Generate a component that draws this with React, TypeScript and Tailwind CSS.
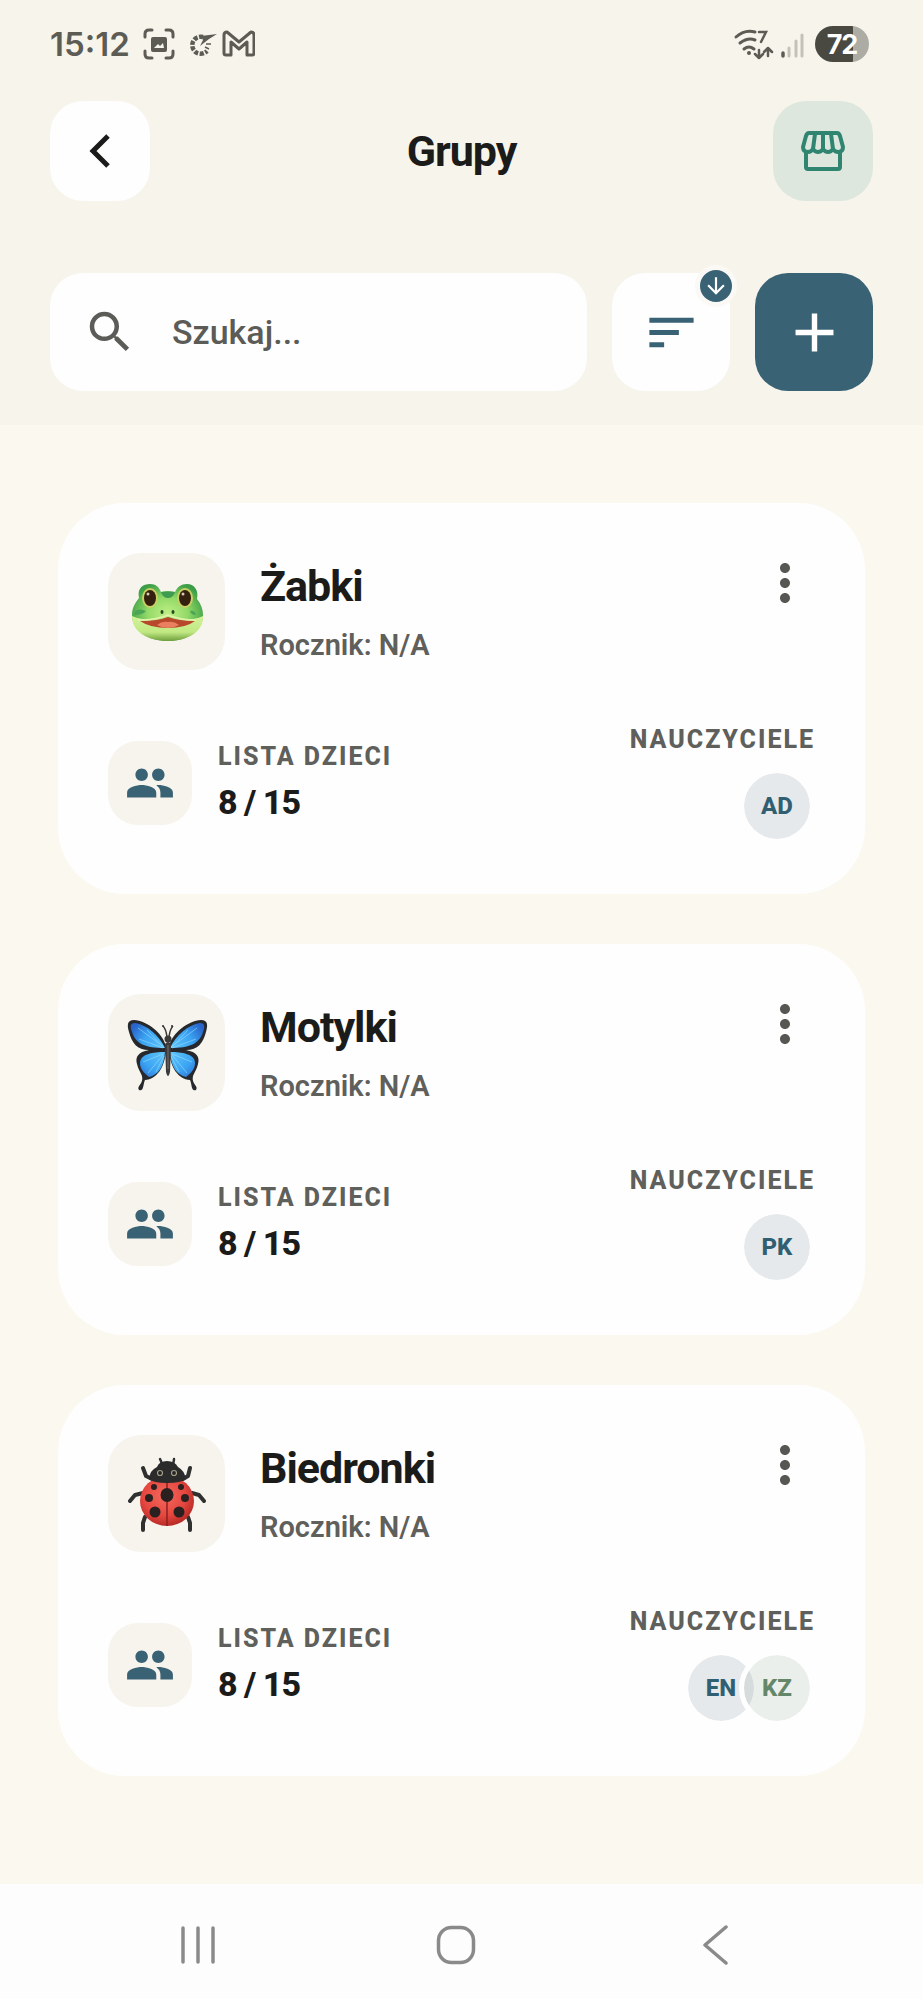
import { useState } from 'react'
import { MdAdd, MdArrowDownward, MdMoreVert, MdPeople, MdSearch, MdSort } from 'react-icons/md'

type Teacher = { initials: string; tone: 'blue' | 'green' }
type Group = { name: string; year: string; children: number; limit: number; icon: () => React.ReactNode; teachers: Teacher[] }

const tones = {
  blue: 'bg-[#2f566d]/12 text-[#315f72]',
  green: 'bg-[#5f8263]/12 text-[#64876a]',
}

function Frog() {
  return (
    <svg viewBox="-3 1 140 140" className="size-[140px] shrink-0" aria-hidden="true">
      <defs>
        <radialGradient id="frogSkin" cx="50%" cy="52%" r="56%">
          <stop offset="0" stopColor="#c0ef86" />
          <stop offset="0.5" stopColor="#93da68" />
          <stop offset="1" stopColor="#3b9d46" />
        </radialGradient>
        <linearGradient id="frogChin" x1="0" y1="0" x2="0" y2="1">
          <stop offset="0" stopColor="#d3f39a" />
          <stop offset="0.65" stopColor="#c0e882" />
          <stop offset="1" stopColor="#6f9f3c" />
        </linearGradient>
      </defs>
      <path d="M39 57C37 47 43 43 50 43c6 0 9 3 11 8q7-2 14 0c2-5 6-8 12-8 7 0 12 6 10 15 4 5 6 10 6 16 0 16-16 26-35 26S32 90 32 74c0-7 3-12 7-17Z" fill="url(#frogSkin)" />
      <path d="M61 51q7-1 14 0-2 6-7 6t-7-6Z" fill="#3f9b50" />
      <path d="M32 75c11 5 23 4 36 2 13 2 25 3 35-2 1 15-15 25-35 25S32 91 32 75Z" fill="url(#frogChin)" />
      <path d="M40 80q18 0 28-4 11 4 27 4-9 7-27 7t-28-7Z" fill="#b8482c" />
      <path d="M57 84q5-4 11-3 6-1 11 3-5 3-11 3t-11-3Z" fill="#ea8060" />
      <path d="M38 79q19 0 30-5 12 5 28 5" fill="none" stroke="#dff5ac" strokeWidth="1.500" />
      <ellipse cx="50" cy="57" rx="8" ry="10" fill="#c9cf62" />
      <ellipse cx="85" cy="57" rx="8" ry="10" fill="#c9cf62" />
      <ellipse cx="50" cy="57" rx="6" ry="8" fill="#34200f" />
      <ellipse cx="85" cy="57" rx="6" ry="8" fill="#34200f" />
      <circle cx="48" cy="53" r="1.500" fill="#d8c9b4" />
      <circle cx="83" cy="53" r="1.500" fill="#d8c9b4" />
      <ellipse cx="62" cy="71" rx="1.500" ry="2" fill="#27491f" />
      <ellipse cx="73" cy="71" rx="1.500" ry="2" fill="#27491f" />
      <path d="M35 70q5-3 11 0-3 4-12 4ZM90 70q5-1 6 4-5 0-6-4Z" fill="#4aa555" />
    </svg>
  )
}

function ButterflyWing() {
  return (
    <>
      <path d="M66 60C62 46 47 35 34 34c-7 0-7 5-5 12 3 11 8 18 20 18-11 2-14 7-12 14 1 5 3 7 5 12 2 8-6 10-3 14 5 2 4-6 6-10 12-1 19-12 21-28Z" fill="#27292d" />
      <path d="M65 62C59 49 47 39 35 37c-5 0-5 4-3 9 4 12 13 16 33 16Z" fill="url(#wing)" />
      <path d="M65 66c-12 0-25 2-25 11 0 6 4 10 9 14 9-2 15-10 16-25Z" fill="url(#wing)" />
      <path d="M64 61 38 42M64 62 47 44M63 62 39 53M63 68 43 76M63 69 48 87M64 70 56 86" stroke="#9adcff" strokeWidth="1" opacity="0.6" />
    </>
  )
}

function Butterfly() {
  return (
    <svg viewBox="-3 -3 140 140" className="size-[140px] shrink-0" aria-hidden="true">
      <defs>
        <radialGradient id="wing" gradientUnits="userSpaceOnUse" cx="64" cy="64" r="38">
          <stop offset="0" stopColor="#62c8fa" />
          <stop offset="0.6" stopColor="#3ca4f3" />
          <stop offset="1" stopColor="#2864ca" />
        </radialGradient>
      </defs>
      <ButterflyWing />
      <g transform="matrix(-1 0 0 1 135 0)"><ButterflyWing /></g>
      <path d="M67 51q-1-8-4-11M69 51q1-8 4-11" fill="none" stroke="#3a3834" strokeWidth="1.500" />
      <circle cx="63" cy="40" r="1" fill="#333" />
      <circle cx="72" cy="40" r="1" fill="#333" />
      <circle cx="68" cy="53" r="3.500" fill="#3c3a38" />
      <path d="M65 58q3-4 6 0l-1 28q-2 8-4 0Z" fill="#3c3a3a" />
      <path d="M68 59v24" stroke="#77716c" />
    </svg>
  )
}

function Ladybug() {
  return (
    <svg viewBox="-3 -2 140 140" className="size-[140px] shrink-0" aria-hidden="true">
      <defs>
        <radialGradient id="shell" cx="45%" cy="40%" r="60%">
          <stop offset="0" stopColor="#f4695c" />
          <stop offset="0.65" stopColor="#e5473f" />
          <stop offset="1" stopColor="#b92a26" />
        </radialGradient>
      </defs>
      <g fill="none" stroke="#303030" strokeWidth="4" strokeLinecap="round" strokeLinejoin="round">
        <path d="M52 53 46 50 43 42M83 53l5-3 2-8M43 67l-8 2-5 6M92 67l7 2 5 6M45 91l-2 6v7M88 91l2 6v7" />
        <path d="M62 38q-1-3-2-5M73 38q1-3 1-5" strokeWidth="2.500" />
      </g>
      <ellipse cx="67" cy="75" rx="27" ry="25" fill="url(#shell)" />
      <path d="M49 53q1-9 8-12 2-6 10-6t11 6q6 3 8 12-5 4-19 4t-18-4Z" fill="#2b2b2c" />
      <path d="M67 57v43" stroke="#8d211e" strokeWidth="1.500" />
      <g fill="#2b2020">
        <ellipse cx="67" cy="69" rx="6.500" ry="7" />
        <circle cx="54" cy="61" r="3" />
        <circle cx="81" cy="61" r="3" />
        <circle cx="49" cy="72" r="4" />
        <circle cx="85" cy="72" r="4" />
        <circle cx="55" cy="86" r="5.500" />
        <circle cx="79" cy="86" r="5.500" />
      </g>
      <g fill="#252525" stroke="#a39e84" strokeWidth="1.200">
        <circle cx="60" cy="47" r="2.500" />
        <circle cx="74" cy="47" r="2.500" />
      </g>
    </svg>
  )
}

const groups: Group[] = [
  { name: 'Żabki', year: 'N/A', children: 8, limit: 15, icon: Frog, teachers: [{ initials: 'AD', tone: 'blue' }] },
  { name: 'Motylki', year: 'N/A', children: 8, limit: 15, icon: Butterfly, teachers: [{ initials: 'PK', tone: 'blue' }] },
  { name: 'Biedronki', year: 'N/A', children: 8, limit: 15, icon: Ladybug, teachers: [{ initials: 'EN', tone: 'blue' }, { initials: 'KZ', tone: 'green' }] },
]

function StatusBar() {
  return (
    <div className="flex h-[88px] items-center justify-between pr-[4px] text-[#5c5b54]">
      <div className="flex items-center">
        <span className="w-[93px] font-[Inter] text-[33px] leading-[40px] font-semibold">15:12</span>
        <svg viewBox="0 0 112 32" className="h-[32px] w-[112px]" fill="none" stroke="currentColor" aria-hidden="true">
          <path d="M2 9V6q0-4 4-4h3M23 2h3q4 0 4 4v3M30 23v3q0 4-4 4h-3M9 30H6q-4 0-4-4v-3" strokeWidth="3" strokeLinecap="round" />
          <rect x="8" y="9" width="16" height="15" rx="2" fill="currentColor" stroke="none" />
          <path d="m11 20 4-4 2 2 3-3 1 5Z" fill="#f7f4ec" stroke="none" />
          <path d="M60 9a8.500 8.500 0 1 0 4 14" strokeWidth="4.500" strokeDasharray="4 1.500" />
          <path d="m74 6-16 2 2 4-3 6 9-7Z" fill="currentColor" stroke="none" />
          <path d="M63 16h5M62 19l4 2" strokeWidth="1.500" />
          <path d="M82 25V7q0-3 3-3l12 10 12-10q3 0 3 3v18q0 2-2 2h-5V14l-8 7-8-7v13h-5q-2 0-2-2Z" transform="translate(-1 0)" strokeWidth="3" strokeLinejoin="round" />
        </svg>
      </div>
      <div className="flex items-center gap-[10px]">
        <svg viewBox="0 0 72 34" className="h-[34px] w-[72px]" fill="none" stroke="currentColor" strokeWidth="3" strokeLinecap="round" aria-hidden="true">
          <path d="M3 10q9-8 19-5M7 16q8-6 15-3M11 22q5-4 10 0" />
          <circle cx="16" cy="26" r="2" fill="currentColor" stroke="none" />
          <path d="M26 5h7l-5 10" strokeWidth="2.500" />
          <path d="M26 23v8m-4-4 4 4 4-4M35 29v-8m-4 4 4-4 4 4" strokeWidth="2.500" strokeLinejoin="round" />
          <path d="M50 26v3" strokeWidth="3.500" />
          <path d="M56 21v8M63 14v15M69 8v21" stroke="#c4c1b8" strokeWidth="3" />
        </svg>
        <div className="flex h-[36px] w-[54px] items-center justify-center rounded-full bg-linear-to-r from-[#494942] from-70% to-[#adaca4] to-70% font-[Inter] text-[27px] leading-none font-bold tracking-[-1px] text-white">72</div>
      </div>
    </div>
  )
}

function StorefrontIcon() {
  return (
    <svg viewBox="0 0 44 42" className="h-[42px] w-[44px]" fill="none" stroke="currentColor" strokeWidth="4" strokeLinejoin="round" aria-hidden="true">
      <path d="M8 3h28q2 0 3 3l3 11q0 5-5 5-3 0-5-3-2 3-5 3t-5-3q-2 3-5 3t-5-3q-2 3-5 3-5 0-5-5L5 6q1-3 3-3Z" />
      <path d="M14 4 12 19M22 4v15M30 4l2 15" />
      <path d="M5 21v16q0 2 2 2h30q2 0 2-2V21" />
    </svg>
  )
}

function GroupCard({ group }: { group: Group }) {
  const Icon = group.icon
  return (
    <article className="rounded-[67px] bg-[#fefefe] p-[50px]">
      <div className="flex items-start gap-[35px]">
        <div className="flex size-[117px] shrink-0 items-center justify-center overflow-hidden rounded-[33px] bg-[#f6f4ed]">
          <Icon />
        </div>
        <div className="min-w-0 flex-1 pt-[6px]">
          <h2 className="text-[43px] leading-[54px] font-bold tracking-[-1px] text-[#1b1b19]">{group.name}</h2>
          <p className="mt-[12px] text-[29px] leading-[40px] font-semibold text-[#5f5f5c]">Rocznik: {group.year}</p>
        </div>
        <button type="button" aria-label={`Opcje grupy ${group.name}`} className="text-[#565652]">
          <MdMoreVert size={60} />
        </button>
      </div>
      <div className="mt-[51px] flex items-center justify-between">
        <div className="flex items-center gap-[26px]">
          <div className="flex size-[84px] items-center justify-center rounded-[30px] bg-[#f6f4ed] text-[#3a6275]">
            <MdPeople size={50} />
          </div>
          <div>
            <h3 className="text-[25px] leading-[36px] font-extrabold tracking-[2px] text-[#5f5f5c]">LISTA DZIECI</h3>
            <p className="mt-[4px] mb-[2px] text-[34px] leading-[46px] font-extrabold tracking-[-1px] text-[#1b1b19]">{group.children} / {group.limit}</p>
          </div>
        </div>
        <div className="flex flex-col items-end gap-[10px]">
          <h3 className="text-[25px] leading-[37px] font-extrabold tracking-[2px] text-[#5f5f5c]">NAUCZYCIELE</h3>
          <div className="flex">
            {group.teachers.map((t) => (
              <span key={t.initials} className={`-ml-[20px] flex size-[76px] items-center justify-center rounded-full border-[5px] border-[#fefefe] bg-clip-padding text-[24px] leading-none font-extrabold first:ml-0 ${tones[t.tone]}`}>
                {t.initials}
              </span>
            ))}
          </div>
        </div>
      </div>
    </article>
  )
}

export default function App() {
  const [query, setQuery] = useState('')
  const visible = groups.filter((g) => g.name.toLowerCase().includes(query.toLowerCase()))

  return (
    <div className="flex min-h-screen flex-col bg-[#fbf9ef] font-[Roboto,sans-serif]">
      <header className="bg-[#f7f4ec] px-[50px] pb-[34px]">
        <StatusBar />
        <div className="flex items-center justify-between pt-[13px]">
          <button type="button" aria-label="Wstecz" className="flex size-[100px] items-center justify-center rounded-[33px] bg-[#fefefe] text-[#1b1b19]">
            <svg viewBox="0 0 24 36" className="h-[36px] w-[24px]" fill="none" stroke="currentColor" strokeWidth="5" aria-hidden="true">
              <path d="M20 3 5 18l15 15" />
            </svg>
          </button>
          <h1 className="text-[43px] leading-[56px] font-bold tracking-[-1px] text-[#1b1b19]">Grupy</h1>
          <button type="button" aria-label="Sklep" className="flex size-[100px] items-center justify-center rounded-[33px] bg-[#dde7de] text-[#2f8570]">
            <StorefrontIcon />
          </button>
        </div>
        <div className="mt-[72px] flex gap-[25px]">
          <label className="flex h-[118px] min-w-0 flex-1 items-center gap-[35px] rounded-[33px] bg-[#fefefe] px-[33px] text-[#5b5b58]">
            <MdSearch size={54} className="shrink-0" />
            <input
              type="text"
              aria-label="Szukaj"
              placeholder="Szukaj..."
              value={query}
              onChange={(e) => setQuery(e.target.value)}
              className="min-w-0 flex-1 bg-transparent text-[34px] leading-[44px] font-medium outline-none placeholder:text-[#5b5b58]"
            />
          </label>
          <button type="button" aria-label="Sortuj" className="relative flex size-[118px] shrink-0 items-center justify-center rounded-[33px] bg-[#fefefe] text-[#3a6275]">
            <MdSort size={59} />
            <span className="absolute -top-[8px] -right-[7px] flex size-[42px] items-center justify-center rounded-full border-[5px] border-[#faf9f5] bg-[#3a6275] text-white">
              <MdArrowDownward size={26} className="shrink-0" />
            </span>
          </button>
          <button type="button" aria-label="Dodaj grupę" className="flex size-[118px] shrink-0 items-center justify-center rounded-[33px] bg-[#3a6275] text-white">
            <MdAdd size={65} />
          </button>
        </div>
      </header>

      <main className="flex flex-1 flex-col gap-[50px] px-[58px] pt-[78px] pb-[78px]">
        {visible.map((g) => <GroupCard key={g.name} group={g} />)}
      </main>

      <nav className="flex h-[115px] items-center bg-[#fdfdfd] pt-[6px] pr-[79px] pl-[69px] text-[#8a8a8a]">
        <button type="button" aria-label="Ostatnie" className="flex flex-1 justify-center">
          <svg viewBox="0 0 40 40" className="size-[40px]" stroke="currentColor" strokeWidth="3.500" strokeLinecap="round"><path d="M5 3v34M20 3v34M35 3v34" /></svg>
        </button>
        <button type="button" aria-label="Ekran główny" className="flex flex-1 justify-center">
          <svg viewBox="0 0 40 40" className="size-[40px]" fill="none" stroke="currentColor" strokeWidth="3.500"><rect x="2.500" y="2.500" width="35" height="35" rx="13" /></svg>
        </button>
        <button type="button" aria-label="Powrót" className="flex flex-1 justify-center">
          <svg viewBox="0 0 40 40" className="size-[40px]" fill="none" stroke="currentColor" strokeWidth="3.500" strokeLinecap="round" strokeLinejoin="round"><path d="M31 2 10 20l21 18" /></svg>
        </button>
      </nav>
    </div>
  )
}
